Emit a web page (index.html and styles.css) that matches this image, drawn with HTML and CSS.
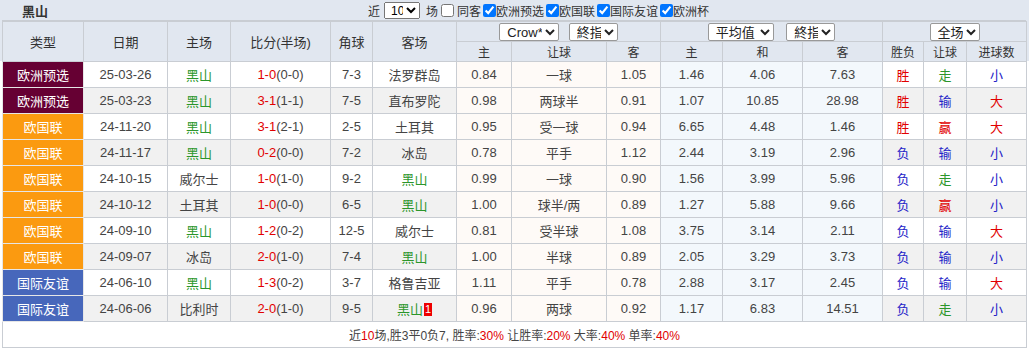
FILE: index.html
```html
<!DOCTYPE html>
<html lang="zh-CN">
<head>
  <meta charset="UTF-8">
  <title>黑山 近期战绩</title>
  <link rel="stylesheet" href="styles.css">
</head>
<body>
  <div class="panel">
    <div class="bar">
      <span class="team">黑山</span>
      <div class="filters">
        <span>近</span>
        <select class="sel-count"><option>10</option></select>
        <span>场</span>
        <label class="chk"><input type="checkbox">同客</label>
        <label class="chk tight"><input type="checkbox" checked>欧洲预选</label>
        <label class="chk tight"><input type="checkbox" checked>欧国联</label>
        <label class="chk tight"><input type="checkbox" checked>国际友谊</label>
        <label class="chk tight"><input type="checkbox" checked>欧洲杯</label>
      </div>
    </div>

    <table class="log">
      <colgroup>
        <col style="width:81px"><col style="width:84px"><col style="width:63px"><col style="width:100px">
        <col style="width:42px"><col style="width:84px"><col style="width:55px"><col style="width:95px">
        <col style="width:54px"><col style="width:62px"><col style="width:80px"><col style="width:80px">
        <col style="width:41px"><col style="width:43px"><col style="width:60px">
      </colgroup>
      <thead>
        <tr class="head-top">
          <th rowspan="2">类型</th>
          <th rowspan="2">日期</th>
          <th rowspan="2">主场</th>
          <th rowspan="2">比分(半场)</th>
          <th rowspan="2">角球</th>
          <th rowspan="2">客场</th>
          <th colspan="3" class="pick">
            <select class="sel-co"><option>Crow*</option></select>
            <select class="sel-end"><option>終指</option></select>
          </th>
          <th colspan="3" class="pick">
            <select class="sel-avg"><option>平均值</option></select>
            <select class="sel-end"><option>終指</option></select>
          </th>
          <th colspan="3" class="pick">
            <select class="sel-half"><option>全场</option></select>
          </th>
        </tr>
        <tr class="head-sub">
          <th>主</th><th>让球</th><th>客</th>
          <th>主</th><th>和</th><th>客</th>
          <th>胜负</th><th>让球</th><th>进球数</th>
        </tr>
      </thead>
      <tbody>
        <tr>
          <td class="kind euq">欧洲预选</td><td>25-03-26</td><td class="home">黑山</td>
          <td><span class="red">1-0</span>(0-0)</td><td>7-3</td><td>法罗群岛</td>
          <td class="odd-a">0.84</td><td class="odd-a">一球</td><td class="odd-a">1.05</td>
          <td class="odd-b">1.46</td><td class="odd-b">4.06</td><td class="odd-b">7.63</td>
          <td class="red">胜</td><td class="green">走</td><td class="blue">小</td>
        </tr>
        <tr>
          <td class="kind euq">欧洲预选</td><td>25-03-23</td><td class="home">黑山</td>
          <td><span class="red">3-1</span>(1-1)</td><td>7-5</td><td>直布罗陀</td>
          <td class="odd-a">0.98</td><td class="odd-a">两球半</td><td class="odd-a">0.91</td>
          <td class="odd-b">1.07</td><td class="odd-b">10.85</td><td class="odd-b">28.98</td>
          <td class="red">胜</td><td class="blue">输</td><td class="red">大</td>
        </tr>
        <tr>
          <td class="kind unl">欧国联</td><td>24-11-20</td><td class="home">黑山</td>
          <td><span class="red">3-1</span>(2-1)</td><td>2-5</td><td>土耳其</td>
          <td class="odd-a">0.95</td><td class="odd-a">受一球</td><td class="odd-a">0.94</td>
          <td class="odd-b">6.65</td><td class="odd-b">4.48</td><td class="odd-b">1.46</td>
          <td class="red">胜</td><td class="red">赢</td><td class="red">大</td>
        </tr>
        <tr>
          <td class="kind unl">欧国联</td><td>24-11-17</td><td class="home">黑山</td>
          <td><span class="red">0-2</span>(0-0)</td><td>7-2</td><td>冰岛</td>
          <td class="odd-a">0.78</td><td class="odd-a">平手</td><td class="odd-a">1.12</td>
          <td class="odd-b">2.44</td><td class="odd-b">3.19</td><td class="odd-b">2.96</td>
          <td class="blue">负</td><td class="blue">输</td><td class="blue">小</td>
        </tr>
        <tr>
          <td class="kind unl">欧国联</td><td>24-10-15</td><td>威尔士</td>
          <td><span class="red">1-0</span>(1-0)</td><td>9-2</td><td class="home">黑山</td>
          <td class="odd-a">0.99</td><td class="odd-a">一球</td><td class="odd-a">0.90</td>
          <td class="odd-b">1.56</td><td class="odd-b">3.99</td><td class="odd-b">5.96</td>
          <td class="blue">负</td><td class="green">走</td><td class="blue">小</td>
        </tr>
        <tr>
          <td class="kind unl">欧国联</td><td>24-10-12</td><td>土耳其</td>
          <td><span class="red">1-0</span>(0-0)</td><td>6-5</td><td class="home">黑山</td>
          <td class="odd-a">1.00</td><td class="odd-a">球半/两</td><td class="odd-a">0.89</td>
          <td class="odd-b">1.27</td><td class="odd-b">5.88</td><td class="odd-b">9.66</td>
          <td class="blue">负</td><td class="red">赢</td><td class="blue">小</td>
        </tr>
        <tr>
          <td class="kind unl">欧国联</td><td>24-09-10</td><td class="home">黑山</td>
          <td><span class="red">1-2</span>(0-2)</td><td>12-5</td><td>威尔士</td>
          <td class="odd-a">0.81</td><td class="odd-a">受半球</td><td class="odd-a">1.08</td>
          <td class="odd-b">3.75</td><td class="odd-b">3.14</td><td class="odd-b">2.11</td>
          <td class="blue">负</td><td class="blue">输</td><td class="red">大</td>
        </tr>
        <tr>
          <td class="kind unl">欧国联</td><td>24-09-07</td><td>冰岛</td>
          <td><span class="red">2-0</span>(1-0)</td><td>7-4</td><td class="home">黑山</td>
          <td class="odd-a">1.00</td><td class="odd-a">半球</td><td class="odd-a">0.89</td>
          <td class="odd-b">2.05</td><td class="odd-b">3.29</td><td class="odd-b">3.73</td>
          <td class="blue">负</td><td class="blue">输</td><td class="blue">小</td>
        </tr>
        <tr>
          <td class="kind fri">国际友谊</td><td>24-06-10</td><td class="home">黑山</td>
          <td><span class="red">1-3</span>(0-2)</td><td>3-7</td><td>格鲁吉亚</td>
          <td class="odd-a">1.11</td><td class="odd-a">平手</td><td class="odd-a">0.78</td>
          <td class="odd-b">2.88</td><td class="odd-b">3.17</td><td class="odd-b">2.45</td>
          <td class="blue">负</td><td class="blue">输</td><td class="red">大</td>
        </tr>
        <tr>
          <td class="kind fri">国际友谊</td><td>24-06-06</td><td>比利时</td>
          <td><span class="red">2-0</span>(1-0)</td><td>9-5</td><td class="home">黑山<span class="card">1</span></td>
          <td class="odd-a">0.96</td><td class="odd-a">两球</td><td class="odd-a">0.92</td>
          <td class="odd-b">1.17</td><td class="odd-b">6.83</td><td class="odd-b">14.51</td>
          <td class="blue">负</td><td class="green">走</td><td class="blue">小</td>
        </tr>
      </tbody>
      <tfoot>
        <tr>
          <td colspan="15" class="summary">
            近<span class="red">10</span>场,胜3平0负7, 胜率:<span class="red">30%</span>
            让胜率:<span class="red">20%</span> 大率:<span class="red">40%</span> 单率:<span class="red">40%</span>
          </td>
        </tr>
      </tfoot>
    </table>
  </div>
</body>
</html>
```

FILE: styles.css
```css
:root {
  --head-bg: #e1e7f0;
  --line: #c9cdd3;
  --text: #333;
  --red: #e10000;
  --blue: #2424c8;
  --green: #2b962b;
  --stripe: #f1f1f1;
}

* {
  box-sizing: border-box;
}

body {
  margin: 0;
  font-family: "Liberation Sans", "Noto Sans CJK SC", sans-serif;
  font-size: 12px;
  color: var(--text);
  background: #fff;
}

.panel {
  padding: 0 3px 0 2px;
  background: linear-gradient(var(--head-bg) 61px, #fff 61px);
}

/* top bar */
.bar {
  display: flex;
  align-items: center;
  height: 21px;
  border-bottom: 1px solid var(--line);
}

.team {
  font-weight: bold;
  font-size: 13px;
  padding-left: 20px;
  width: 366px;
}

.filters {
  display: flex;
  align-items: center;
  font-size: 12px;
}

.filters select {
  font-family: "Liberation Sans", "Noto Sans CJK SC", sans-serif;
  font-size: 12px;
  height: 17px;
  margin: 0 6px 0 4px;
  padding: 0 0 0 2px;
  width: 36px;
}

.chk {
  display: flex;
  align-items: center;
}

.chk input {
  width: 13px;
  height: 13px;
  margin: 0 3px 0 3px;
}

.chk.tight input {
  margin: 0 0 0 2px;
}

/* table */
.log {
  width: 1024px;
  table-layout: fixed;
  border-collapse: collapse;
  text-align: center;
}

.log th,
.log td {
  border: 1px solid var(--line);
  padding: 0;
  white-space: nowrap;
}

.log th {
  font-weight: normal;
  background: var(--head-bg);
  font-size: 12px;
}

.head-top th {
  height: 20px;
}

.head-sub th {
  height: 20px;
}

.head-top th[rowspan] {
  font-size: 13px;
}

.pick select {
  font-family: "Liberation Sans", "Noto Sans CJK SC", sans-serif;
  font-size: 13px;
  height: 18px;
  padding: 0 0 0 3px;
  border: 1px solid #999;
  border-radius: 2px;
  background: #fff;
  color: #222;
  vertical-align: middle;
}

.sel-co { width: 60px; margin-right: 6px; }
.sel-end { width: 49px; }
.sel-avg { width: 66px; margin-right: 9px; }
.sel-half { width: 50px; }

.log td {
  height: 26px;
  font-size: 13px;
  color: #444;
}

.log tbody tr:nth-child(even) td {
  background: var(--stripe);
}

.log tbody td.odd-a,
.log tbody tr:nth-child(even) td.odd-a {
  background: #fefaf7;
}

.log tbody td.odd-b,
.log tbody tr:nth-child(even) td.odd-b {
  background: #f3f8fc;
}

.log td.kind {
  color: #fff;
  border-color: #e6e6e6;
}

.log tbody tr td.euq { background: #660033; }
.log tbody tr td.unl { background: #fb9a10; }
.log tbody tr td.fri { background: #4767bb; }

.log td.home { color: var(--green); }
.log td.red, .red { color: var(--red); }
.log td.blue { color: var(--blue); }
.log td.green { color: var(--green); }

.card {
  display: inline-block;
  background: #e00;
  color: #fff;
  font-size: 11px;
  line-height: 13px;
  width: 8px;
  margin-left: 1px;
  vertical-align: 1px;
}

.log td.summary {
  height: 26px;
  background: #fff;
  font-size: 12px;
}
```
